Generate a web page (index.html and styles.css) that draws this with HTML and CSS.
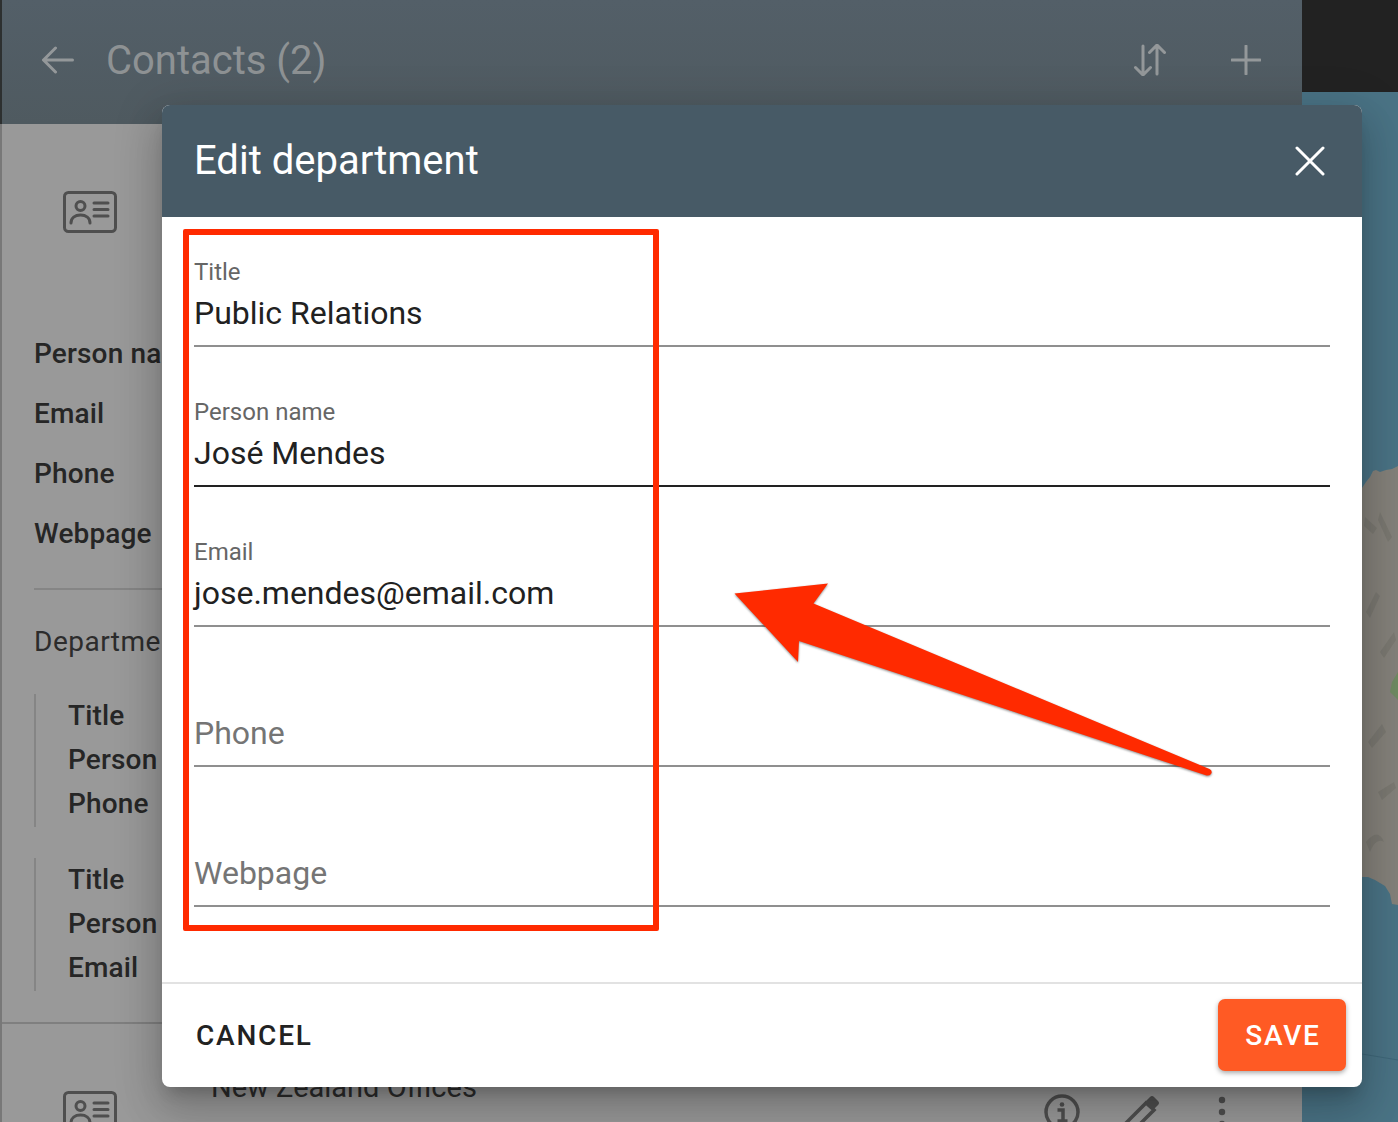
FILE: index.html
```html
<!DOCTYPE html>
<html lang="en">
<head>
  <meta charset="UTF-8">
  <title>Contacts</title>
  <link rel="stylesheet" href="styles.css">
</head>
<body>
<div class="page">
  <svg class="map" width="36" height="1030" viewBox="0 0 36 1030">
    <path class="land" d="M0 396L4 390 8 385 11 379 14 378 18 380 24 378 30 377 36 374V813L30 812 28 802 23 794 13 788 6 785 0 785Z"/>
    <path class="land-dark" d="M3 425L15 436 11 442 2 434ZM18 420L30 445 26 450 16 428ZM4 520L14 500 18 504 8 526ZM18 560L32 540 34 548 22 566ZM6 650L20 632 24 640 10 656ZM16 700L32 690 34 696 20 708ZM4 750Q16 735 22 750 14 745 8 760Z"/>
    <path class="park" d="M36 580L30 590 28 600 36 608Z"/>
    <path class="border-line" d="M0 962L36 968"/>
  </svg>
  <div class="topbar"></div>

  <div class="sheet">
    <header class="sheet-head">
      <svg class="head-icon" width="32" height="28" viewBox="0 0 32 28"><path d="M30.500 14H2M13.500 2L1.500 14l12 12"/></svg>
      <h1>Contacts (2)</h1>
      <div class="head-actions">
        <svg class="head-icon" width="32" height="32" viewBox="0 0 32 32"><path d="M9 2v29M1.500 23.500L9 31l7.500-7.500M23 30V1M15.500 8.500L23 1l7.500 7.500"/></svg>
        <svg class="head-icon" width="30" height="30" viewBox="0 0 30 30"><path d="M15 1v28M1 15h28"/></svg>
      </div>
    </header>

    <section class="card">
      <div class="card-head">
        <svg class="id-icon" width="54" height="42" viewBox="0 0 54 42">
          <rect x="1.500" y="1.500" width="51" height="39" rx="4"/>
          <circle cx="17.500" cy="15" r="4.500"/>
          <path d="M8 32c0-5 4-8 9.500-8s9.500 3 9.500 8M31 12h14M31 18.500h14M31 25h14"/>
        </svg>
      </div>
      <div class="details">
        <div class="detail-row">Person na</div>
        <div class="detail-row">Email</div>
        <div class="detail-row">Phone</div>
        <div class="detail-row">Webpage</div>
      </div>
      <div class="departments">
        <div class="dept-title">Departme</div>
        <div class="dept">
          <div>Title</div>
          <div>Person</div>
          <div>Phone</div>
        </div>
        <div class="dept">
          <div>Title</div>
          <div>Person</div>
          <div>Email</div>
        </div>
      </div>
    </section>

    <section class="card card-next">
      <div class="card-head">
        <svg class="id-icon" width="54" height="42" viewBox="0 0 54 42">
          <rect x="1.500" y="1.500" width="51" height="39" rx="4"/>
          <circle cx="17.500" cy="15" r="4.500"/>
          <path d="M8 32c0-5 4-8 9.500-8s9.500 3 9.500 8M31 12h14M31 18.500h14M31 25h14"/>
        </svg>
        <div class="card-title">New Zealand Offices</div>
        <div class="card-actions">
          <svg class="tool-icon" width="36" height="36" viewBox="0 0 36 36">
            <circle cx="18" cy="18" r="16"/>
            <circle class="solid" cx="18" cy="10.500" r="2.300"/>
            <path d="M13.500 16H19v11M13.500 27h10"/>
          </svg>
          <svg class="tool-icon" width="36" height="36" viewBox="0 0 36 36">
            <path d="M2 36V29L22 9l8 7L10 36"/>
            <path class="solid" d="M21 8l5-5q2-2 4 0l4 4q2 2 0 4l-5 5z"/>
          </svg>
          <svg class="tool-icon" width="36" height="36" viewBox="0 0 36 36">
            <circle class="solid" cx="18" cy="6" r="3.200"/>
            <circle class="solid" cx="18" cy="18" r="3.200"/>
            <circle class="solid" cx="18" cy="30" r="3.200"/>
          </svg>
        </div>
      </div>
    </section>
  </div>

  <div class="dialog">
    <div class="dialog-head">
      <h2>Edit department</h2>
      <svg class="close-icon" width="30" height="30" viewBox="0 0 30 30"><path d="M2 2l26 26M28 2L2 28"/></svg>
    </div>
    <div class="dialog-body">
      <div class="field">
        <div class="field-label">Title</div>
        <div class="field-value">Public Relations</div>
      </div>
      <div class="field field-active">
        <div class="field-label">Person name</div>
        <div class="field-value">José Mendes</div>
      </div>
      <div class="field">
        <div class="field-label">Email</div>
        <div class="field-value">jose.mendes@email.com</div>
      </div>
      <div class="field">
        <div class="field-value field-empty">Phone</div>
      </div>
      <div class="field">
        <div class="field-value field-empty">Webpage</div>
      </div>
    </div>
    <div class="dialog-foot">
      <button class="btn-cancel">CANCEL</button>
      <button class="btn-save">SAVE</button>
    </div>
  </div>

  <div class="mark-box"></div>
  <svg class="mark-arrow" width="1398" height="1122" viewBox="0 0 1398 1122">
    <path d="M734.500 593.500L828 583.500 813.500 603.500 1209.500 769Q1213 771 1211 774 1209 776.500 1205 775L799 641 798 662Z"/>
  </svg>
</div>
</body>
</html>
```

FILE: styles.css
```css
html, body {
  margin: 0;
  height: 100%;
  overflow: hidden;
}

body {
  font-family: Roboto, "Liberation Sans", sans-serif;
  background-color: #4a7385;
}

.page {
  position: relative;
  width: 1398px;
  height: 1122px;
  overflow: hidden;
}

/* bits of the page behind the dim layer */
.map {
  position: absolute;
  left: 1362px;
  top: 92px;
}

.land {
  fill: #84817a;
}

.land-dark {
  fill: #7a7871;
}

.park {
  fill: #6f8a62;
}

.border-line {
  stroke: #3f6779;
  stroke-width: 1;
  fill: none;
}

.topbar {
  position: absolute;
  right: 0;
  top: 0;
  width: 96px;
  height: 92px;
  background-color: #222;
}

.sheet {
  position: relative;
  width: 1300px;
  height: 1122px;
  border-left: 2px solid #787878;
  background-color: #999;
}

.sheet-head {
  display: flex;
  align-items: center;
  box-sizing: border-box;
  height: 124px;
  padding: 0 40px 4px 40px;
  background: linear-gradient(#535f68, #4f5a60);
  box-shadow: -2px 0 0 #2d3030;
}

.sheet-head h1 {
  margin: 0 0 0 32px;
  font-size: 40px;
  font-weight: 400;
  color: #8e9294;
}

.head-icon {
  fill: none;
  stroke: #94989a;
  stroke-width: 3;
  stroke-linecap: round;
  stroke-linejoin: round;
}

.head-actions {
  display: flex;
  align-items: center;
  gap: 65px;
  margin-left: auto;
  margin-right: 1px;
}

.card-head {
  display: flex;
  align-items: center;
  height: 176px;
  padding-left: 61px;
}

.id-icon {
  fill: none;
  stroke: #4f4f4f;
  stroke-width: 3;
  stroke-linecap: round;
  flex-shrink: 0;
}

.card-title {
  margin-left: 94px;
  margin-bottom: 51px;
  font-size: 29px;
  color: #2c2c2c;
}

.details {
  padding: 24px 0 0 32px;
  white-space: nowrap;
}

.detail-row {
  height: 60px;
  font-size: 28px;
  font-weight: 500;
  letter-spacing: 0.15px;
  line-height: 60px;
  color: #262626;
}

.departments {
  width: 128px;
  margin: 24px 0 0 32px;
  padding-top: 32px;
  border-top: 2px solid #858585;
  white-space: nowrap;
}

.dept-title {
  height: 72px;
  font-size: 28px;
  letter-spacing: 0.5px;
  line-height: 40px;
  color: #2c2c2c;
}

.dept {
  margin-bottom: 31px;
  padding: 0 0 1px 32px;
  border-left: 2px solid #858585;
  font-size: 28px;
  font-weight: 500;
  letter-spacing: 0.15px;
  line-height: 44px;
  color: #262626;
}

.card-next {
  border-top: 2px solid #7f7f7f;
}

.card-actions {
  display: flex;
  align-items: center;
  gap: 44px;
  margin-left: auto;
  margin-right: 62px;
}

.tool-icon {
  fill: none;
  stroke: #4f4f4f;
  stroke-width: 3.500;
}

.tool-icon .solid {
  fill: #4f4f4f;
  stroke: none;
}

.dialog {
  position: absolute;
  left: 162px;
  top: 105px;
  display: flex;
  flex-direction: column;
  width: 1200px;
  height: 982px;
  background-color: #fff;
  border-radius: 8px;
  box-shadow: 0 11px 15px -7px rgba(0, 0, 0, 0.2), 0 24px 38px 3px rgba(0, 0, 0, 0.14), 0 9px 46px 8px rgba(0, 0, 0, 0.12);
  overflow: hidden;
}

.dialog-head {
  display: flex;
  align-items: center;
  justify-content: space-between;
  box-sizing: border-box;
  height: 112px;
  padding: 0 37px 2px 32px;
  background-color: #475a66;
}

.dialog-head h2 {
  margin: 0;
  font-size: 40px;
  font-weight: 400;
  color: #fff;
}

.close-icon {
  margin-top: 2px;
  fill: none;
  stroke: #fff;
  stroke-width: 3;
  stroke-linecap: round;
}

.dialog-body {
  flex: 1;
  padding: 0 32px;
}

.field {
  display: flex;
  flex-direction: column;
  justify-content: flex-end;
  box-sizing: border-box;
  height: 140px;
  padding-bottom: 9px;
  border-bottom: 2px solid #8f8f8f;
}

.field:first-child {
  height: 130px;
}

.field-active {
  border-bottom-color: #222;
}

.field-label {
  margin-bottom: 3px;
  font-size: 24px;
  line-height: 30px;
  color: #666;
}

.field-value {
  font-size: 32px;
  line-height: 46px;
  color: #212121;
}

.field-empty {
  color: #757575;
}

.dialog-foot {
  display: flex;
  align-items: center;
  justify-content: space-between;
  box-sizing: border-box;
  height: 105px;
  padding: 0 16px 0 34px;
  border-top: 2px solid #e2e2e2;
}

.btn-cancel {
  padding: 0;
  border: none;
  background: none;
  font-family: inherit;
  font-size: 28px;
  font-weight: 500;
  letter-spacing: 1.800px;
  color: #222;
}

.btn-save {
  width: 128px;
  height: 72px;
  margin-top: -1px;
  padding: 0 0 0 2px;
  border: none;
  border-radius: 7px;
  background-color: #ff5a24;
  box-shadow: 0 2px 5px rgba(0, 0, 0, 0.35);
  font-family: inherit;
  font-size: 28px;
  font-weight: 500;
  letter-spacing: 1.800px;
  color: #fff;
}

/* red annotations on top of the screenshot */
.mark-box {
  position: absolute;
  left: 183px;
  top: 229px;
  box-sizing: border-box;
  width: 476px;
  height: 702px;
  border: 6px solid #ff2a00;
  border-radius: 2px;
}

.mark-arrow {
  position: absolute;
  left: 0;
  top: 0;
  fill: #ff2a00;
  filter: drop-shadow(0 1px 1px rgba(0, 0, 0, 0.45));
}
```
